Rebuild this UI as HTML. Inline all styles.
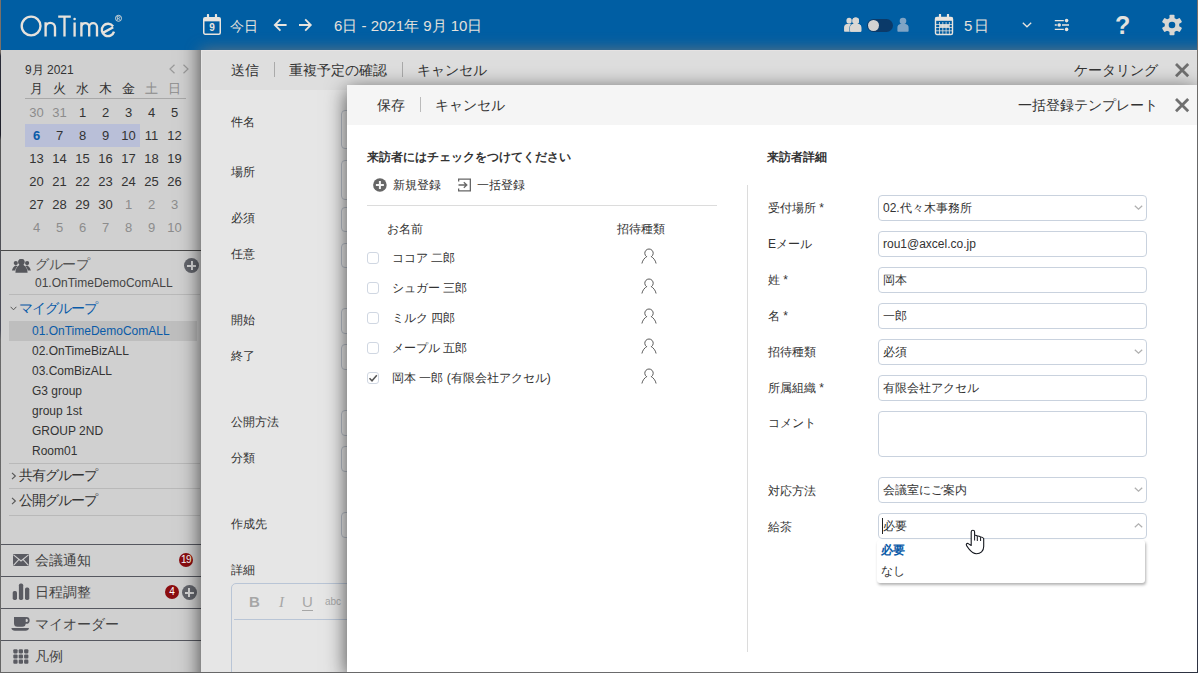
<!DOCTYPE html>
<html lang="ja">
<head>
<meta charset="utf-8">
<title>OnTime</title>
<style>
*{box-sizing:border-box;margin:0;padding:0}
html,body{width:1200px;height:675px;overflow:hidden;background:#fff;font-family:"Liberation Sans",sans-serif;color:#333}
#app{position:absolute;left:0;top:0;width:1198px;height:673px;overflow:hidden;background:#d0d0d0}
#redge{position:absolute;left:1197px;top:0;width:1px;height:673px;background:linear-gradient(#7a7068 0,#6a6a6a 120px,#5a5c62 400px,#3a4050 600px,#2c3140 100%);z-index:50}
#bedge{position:absolute;left:0;top:672px;width:1198px;height:1px;background:linear-gradient(to right,#666 0,#6c6c6e 800px,#3a4050 1050px,#2c3140 100%);z-index:50}
#ledge{position:absolute;left:0;top:0;width:1px;height:673px;background:linear-gradient(#7a7068 0,#7a7068 52px,#2a2c38 56px,#1c1e28 135px,#555 140px,#4a4c58 330px,#6a6a6a 340px,#666 100%);z-index:50}
.abs{position:absolute;white-space:nowrap}
/* top bar */
#top{position:absolute;left:0;top:0;width:1197px;height:50px;background:#005ea3;color:#ece8e2;z-index:5;overflow:hidden}
#top:after{content:"";position:absolute;left:201px;top:50px;width:1100px;height:30px;box-shadow:0 0 15px rgba(119,119,119,.85)}
#top .t{position:absolute;white-space:nowrap;font-size:15px;line-height:20px;top:16px;color:#e4e1dc}
/* sidebar */
#side{position:absolute;left:0;top:50px;width:201px;height:622px;background:#d0d0d0;font-size:13px}
.mc{position:absolute;width:23px;text-align:center;font-size:13px;line-height:16px;color:#333}
.mc.g{color:#8c8c8c}
.hl{position:absolute;background:#b9bfd8}
.ln{position:absolute;height:1px;background:#b9b9b9}
.dln{position:absolute;height:1px;background:#55575f;left:0;width:201px}
.gi{position:absolute;left:32px;font-size:12px;line-height:16px;margin-top:1px;color:#333;white-space:nowrap}
.gh{position:absolute;font-size:14px;letter-spacing:-1px;line-height:18px;color:#333;white-space:nowrap}
.sb{position:absolute;left:35px;font-size:14px;line-height:18px;color:#444;white-space:nowrap}
.badge{position:absolute;width:14px;height:14px;border-radius:50%;background:#8b0d10;color:#fff;font-size:10px;line-height:14px;text-align:center}
.plus{position:absolute;width:15px;height:15px;border-radius:50%;background:#63656c}
.plus:before{content:"";position:absolute;left:3px;top:6.5px;width:9px;height:2px;background:#d8d8d8}
.plus:after{content:"";position:absolute;left:6.5px;top:3px;width:2px;height:9px;background:#d8d8d8}
/* dialog 1 */
#d1{position:absolute;left:201px;top:50px;width:996px;height:622px;background:#e6e6e6}
#d1s{position:absolute;left:201px;top:0;width:996px;height:740px;box-shadow:0 0 20px rgba(0,0,0,.7)}
#d1h{position:absolute;left:0;top:0;width:996px;height:40px;background:#dedede;border-top:1px solid #e6e3e3;border-left:1px solid #e6e6e6}
.ht{position:absolute;font-size:14px;line-height:20px;color:#333;white-space:nowrap}
.sep{position:absolute;width:1px;height:15px;background:#aaa}
.lb{position:absolute;left:30px;font-size:12px;line-height:16px;color:#333;white-space:nowrap}
.bi{position:absolute;left:140px;width:300px;border:1px solid #b9bfc9;border-radius:4px;background:#eaeaea}
/* dialog 2 */
#d2{position:absolute;left:347px;top:85px;width:850px;height:587px;background:#fff;box-shadow:0 5px 20px rgba(0,0,0,.7)}
#d2h{position:absolute;left:0;top:0;width:850px;height:40px;background:#f5f5f5}
.l2{position:absolute;font-size:12px;line-height:16px;color:#333;white-space:nowrap}
.b{font-weight:bold}
.in{position:absolute;left:531px;width:269px;height:26px;border:1px solid #c9d2de;border-radius:4px;background:#fff;font-size:12px;line-height:24px;padding-left:4px;color:#333;white-space:nowrap}
.cb{position:absolute;left:20px;width:12px;height:12px;border:1px solid #d0d7e2;border-radius:3px;background:#fff}
.chev{position:absolute;right:3.500px;top:7px;width:9px;height:9px}
</style>
</head>
<body>
<div id="app">
<!--TOP-->
<div id="top">
<svg class="abs" style="left:0;top:0" width="140" height="50" viewBox="0 0 140 50" fill="none" stroke="#e6e2dc" stroke-width="2.350" stroke-linecap="butt">
<circle cx="31.1" cy="26" r="9.4"/>
<path d="M45.6 22.3V36.6M45.6 27.5a4.7 4.7 0 0 1 9.4 0V36.6"/>
<path d="M58.2 16.6H70.8M64.5 16.6V36.6"/>
<path d="M74.6 22.5V36.6"/><circle cx="74.6" cy="19" r="1.3" fill="#e9e5df" stroke="none"/>
<path d="M81.4 22.3V36.6M81.4 27a3.9 3.9 0 0 1 7.8 0V36.6M89.2 27a3.9 3.9 0 0 1 7.8 0V36.6"/>
<path d="M103.4 32.6L113.2 27.2M114 31.6a6.2 6.2 0 1 1 -0.9 -5.2"/>
<circle cx="118.5" cy="18.3" r="3" stroke-width="0.9"/>
<path d="M117.4 20V16.6h1.2a1 1 0 0 1 0 2h-1.2m1.2 0l1.1 1.4" stroke-width="0.7"/>
</svg>
<!-- calendar 9 -->
<svg class="abs" style="left:202px;top:14px" width="20" height="22" viewBox="0 0 20 22" fill="none" stroke="#e9e5df">
<rect x="1.75" y="3.75" width="16.5" height="16.5" rx="1.5" stroke-width="1.5"/>
<rect x="1.75" y="3.75" width="16.5" height="3.6" fill="#e9e5df" stroke="none"/>
<path d="M6 1v4M14 1v4" stroke-width="2.2" stroke-linecap="round"/>
<text x="10" y="17.3" font-family="Liberation Sans, sans-serif" font-size="10" font-weight="bold" fill="#e9e5df" stroke="none" text-anchor="middle">9</text>
</svg>
<div class="t" style="left:230px;font-size:14px">今日</div>
<svg class="abs" style="left:273px;top:18px" width="40" height="14" viewBox="0 0 40 14" fill="none" stroke="#e9e5df" stroke-width="1.8">
<path d="M13.6 7H2.2M7.4 1.4L1.8 7l5.600 5.600"/>
<path d="M26 7H37.400M32.200 1.400L37.800 7l-5.600 5.600"/>
</svg>
<div class="t" style="left:334px">6日&nbsp;-&nbsp;2021年&nbsp;9月&nbsp;10日</div>
<!-- people -->
<svg class="abs" style="left:843px;top:17px" width="20" height="16" viewBox="0 0 20 16">
<g fill="#dad8d4"><g transform="translate(0.700,0) scale(0.900,1)"><circle cx="6" cy="3.700" r="3"/><path d="M0.400 14V10.800Q0.400 7.600 3.400 7.100H8.600Q11.600 7.600 11.600 10.800V14Q11.600 14.800 10.800 14.800H1.200Q0.400 14.800 0.400 14Z"/></g>
<g transform="translate(6.700,0)" stroke="#005ea3" stroke-width="1.200" paint-order="stroke"><circle cx="6" cy="3.900" r="3.300"/><path d="M0.400 14V10.800Q0.400 7.600 3.400 7.100H8.600Q11.600 7.600 11.600 10.800V14Q11.600 14.800 10.800 14.800H1.200Q0.400 14.800 0.400 14Z"/></g>
<g transform="translate(6.700,0)"><circle cx="6" cy="3.900" r="3.300"/><path d="M0.400 14V10.800Q0.400 7.600 3.400 7.100H8.600Q11.600 7.600 11.600 10.800V14Q11.600 14.800 10.800 14.800H1.200Q0.400 14.800 0.400 14Z"/></g></g>
</svg>
<div class="abs" style="left:867px;top:19px;width:26px;height:13px;border-radius:7px;background:#0b3a69"></div>
<div class="abs" style="left:868.300px;top:20.300px;width:10.800px;height:10.800px;border-radius:50%;background:#d2d2d2"></div>
<svg class="abs" style="left:896.500px;top:17px" width="13" height="16" viewBox="0 0 13 16"><g fill="#7fa4c5"><circle cx="6" cy="4" r="3.300"/><path d="M0.400 14V10.800Q0.400 7.600 3.400 7.100H8.600Q11.600 7.600 11.600 10.800V14Q11.600 14.800 10.800 14.800H1.200Q0.400 14.800 0.400 14Z"/></g></svg>
<!-- calendar grid -->
<svg class="abs" style="left:934px;top:14px" width="20" height="22" viewBox="0 0 20 22" fill="none" stroke="#e9e5df">
<rect x="1.500" y="3.500" width="17" height="17" rx="1.500" stroke-width="1.400"/>
<rect x="1.500" y="3.500" width="17" height="3.300" fill="#e9e5df" stroke="none"/>
<path d="M6 0.800v4.400M14 0.800v4.400" stroke-width="2.200" stroke-linecap="round"/>
<path d="M2 10.500h16M2 13.500h16M2 16.800h16M5.500 8v12M8.800 8v12M12.100 8v12M15.400 8v12" stroke-width="0.900" opacity="0.850"/>
<rect x="6" y="10.600" width="9" height="2.800" fill="#e9e5df" stroke="none" opacity="0.900"/>
</svg>
<div class="t" style="left:964px;letter-spacing:1.500px">5日</div>
<svg class="abs" style="left:1022px;top:22px" width="10" height="6" viewBox="0 0 10 6" fill="none" stroke="#e9e5df" stroke-width="1.300"><path d="M0.800 0.800L5 4.800L9.200 0.800"/></svg>
<!-- sliders -->
<svg class="abs" style="left:1054px;top:18px" width="16" height="14" viewBox="0 0 16 14" fill="#e9e5df" stroke="#e9e5df" stroke-width="1.300">
<path d="M0.800 2.600h9M0.800 7h2M8 7h7M0.800 11.400h9" fill="none"/>
<circle cx="12.600" cy="2.600" r="1.800" stroke="none"/><circle cx="5.200" cy="7" r="1.800" stroke="none"/><circle cx="12.600" cy="11.400" r="1.800" stroke="none"/>
</svg>
<div class="abs" style="left:1115px;top:11px;width:14px;text-align:center;font-size:25px;line-height:28px;font-weight:bold;color:#e4e2de">?</div>
<!-- gear -->
<svg class="abs" style="left:1161px;top:14px" width="22" height="22" viewBox="-11 -11 22 22">
<g fill="#d9d7d3">
<circle r="7.300"/>
<g id="tooth"><rect x="-2.500" y="-10.200" width="5" height="5" rx="0.800"/></g>
<use href="#tooth" transform="rotate(60)"/><use href="#tooth" transform="rotate(120)"/><use href="#tooth" transform="rotate(180)"/><use href="#tooth" transform="rotate(240)"/><use href="#tooth" transform="rotate(300)"/>
</g><circle r="3.300" fill="#005ea3"/>
</svg>
</div>
<!--SIDE-->
<div id="side">
<div class="abs" style="left:25px;top:12px;font-size:12px;line-height:16px;color:#333">9月 2021</div>
<svg class="abs" style="left:168px;top:14px" width="22" height="10" viewBox="0 0 22 10" fill="none" stroke="#9a9a9a" stroke-width="1.200"><path d="M6.500 0.800L2 5l4.500 4.200M15.500 0.800L20 5l-4.500 4.200"/></svg>
<div class="mc" style="left:25px;top:31px;font-size:13px">月</div>
<div class="mc" style="left:48px;top:31px;font-size:13px">火</div>
<div class="mc" style="left:71px;top:31px;font-size:13px">水</div>
<div class="mc" style="left:94px;top:31px;font-size:13px">木</div>
<div class="mc" style="left:117px;top:31px;font-size:13px">金</div>
<div class="mc g" style="left:140px;top:31px;font-size:13px">土</div>
<div class="mc g" style="left:163px;top:31px;font-size:13px">日</div>
<div class="ln" style="left:25px;width:161px;top:48px;background:#a8a8a8"></div>
<div class="hl" style="left:25px;top:74px;width:115px;height:23px"></div>
<div class="mc g" style="left:25px;top:55px">30</div>
<div class="mc g" style="left:48px;top:55px">31</div>
<div class="mc" style="left:71px;top:55px">1</div>
<div class="mc" style="left:94px;top:55px">2</div>
<div class="mc" style="left:117px;top:55px">3</div>
<div class="mc" style="left:140px;top:55px">4</div>
<div class="mc" style="left:163px;top:55px">5</div>
<div class="mc" style="left:25px;top:78px;color:#0a5ba8;font-weight:bold">6</div>
<div class="mc" style="left:48px;top:78px">7</div>
<div class="mc" style="left:71px;top:78px">8</div>
<div class="mc" style="left:94px;top:78px">9</div>
<div class="mc" style="left:117px;top:78px">10</div>
<div class="mc" style="left:140px;top:78px">11</div>
<div class="mc" style="left:163px;top:78px">12</div>
<div class="mc" style="left:25px;top:101px">13</div>
<div class="mc" style="left:48px;top:101px">14</div>
<div class="mc" style="left:71px;top:101px">15</div>
<div class="mc" style="left:94px;top:101px">16</div>
<div class="mc" style="left:117px;top:101px">17</div>
<div class="mc" style="left:140px;top:101px">18</div>
<div class="mc" style="left:163px;top:101px">19</div>
<div class="mc" style="left:25px;top:124px">20</div>
<div class="mc" style="left:48px;top:124px">21</div>
<div class="mc" style="left:71px;top:124px">22</div>
<div class="mc" style="left:94px;top:124px">23</div>
<div class="mc" style="left:117px;top:124px">24</div>
<div class="mc" style="left:140px;top:124px">25</div>
<div class="mc" style="left:163px;top:124px">26</div>
<div class="mc" style="left:25px;top:147px">27</div>
<div class="mc" style="left:48px;top:147px">28</div>
<div class="mc" style="left:71px;top:147px">29</div>
<div class="mc" style="left:94px;top:147px">30</div>
<div class="mc g" style="left:117px;top:147px">1</div>
<div class="mc g" style="left:140px;top:147px">2</div>
<div class="mc g" style="left:163px;top:147px">3</div>
<div class="mc g" style="left:25px;top:170px">4</div>
<div class="mc g" style="left:48px;top:170px">5</div>
<div class="mc g" style="left:71px;top:170px">6</div>
<div class="mc g" style="left:94px;top:170px">7</div>
<div class="mc g" style="left:117px;top:170px">8</div>
<div class="mc g" style="left:140px;top:170px">9</div>
<div class="mc g" style="left:163px;top:170px">10</div>
<div class="dln" style="top:200px;height:1px;background:#4a4a4a"></div>
<svg class="abs" style="left:11px;top:208px" width="21" height="16" viewBox="0 0 21 16"><g fill="#56575c"><circle cx="4.800" cy="5.100" r="2.100"/><path d="M0.900 12.500C1.600 10 3 8.100 4.600 7.600L7.200 8.200C5.600 9.800 4.800 11.500 4.600 12.500Z"/><circle cx="16.100" cy="5.100" r="2.100"/><path d="M19.900 12.500C19.200 10 17.800 8.100 16.200 7.600L13.600 8.200C15.200 9.800 16 11.500 16.200 12.500Z"/><g stroke="#d0d0d0" stroke-width="0.900" paint-order="stroke"><ellipse cx="10.400" cy="4" rx="3.100" ry="3"/><path d="M4.400 14.700C4.400 11 6 8.300 8.400 7L12.400 7C14.800 8.300 16.600 11 16.600 14.700Z"/></g><ellipse cx="10.400" cy="4" rx="3.100" ry="3"/><rect x="8.400" y="6" width="4" height="2"/></g></svg>
<div class="gh" style="left:35px;top:205px;color:#555;font-size:14px;letter-spacing:-0.400px">グループ</div>
<div class="gi" style="left:35px;top:224px;color:#444">01.OnTimeDemoComALL</div>
<div class="plus" style="left:184px;top:208px"></div>
<div class="ln" style="left:9px;width:191px;top:244px"></div>
<svg class="abs" style="left:9.500px;top:255.500px" width="7" height="5" viewBox="0 0 7 5" fill="none" stroke="#555" stroke-width="1"><path d="M0.600 0.800L3.500 3.800L6.400 0.800"/></svg>
<div class="gh" style="left:19px;top:249px;color:#0a5ba8">マイグループ</div>
<div class="hl" style="left:9px;top:271px;width:188px;height:20px;background:#bebebe"></div>
<div class="gi" style="top:272px;color:#0a5ba8">01.OnTimeDemoComALL</div>
<div class="gi" style="top:292px">02.OnTimeBizALL</div>
<div class="gi" style="top:312px">03.ComBizALL</div>
<div class="gi" style="top:332px">G3 group</div>
<div class="gi" style="top:352px">group 1st</div>
<div class="gi" style="top:372px">GROUP 2ND</div>
<div class="gi" style="top:392px">Room01</div>
<div class="ln" style="left:9px;width:191px;top:413px"></div>
<div class="ln" style="left:9px;width:191px;top:438px"></div>
<div class="ln" style="left:9px;width:191px;top:465px"></div>
<svg class="abs" style="left:11px;top:422px" width="6" height="8" viewBox="0 0 6 8" fill="none" stroke="#555" stroke-width="1.100"><path d="M1 0.800L4.400 4L1 7.200"/></svg>
<div class="gh" style="left:19px;top:416px">共有グループ</div>
<svg class="abs" style="left:11px;top:447px" width="6" height="8" viewBox="0 0 6 8" fill="none" stroke="#555" stroke-width="1.100"><path d="M1 0.800L4.400 4L1 7.200"/></svg>
<div class="gh" style="left:19px;top:441px">公開グループ</div>
<div class="dln" style="top:494px"></div>
<div class="dln" style="top:526px"></div>
<div class="dln" style="top:558px"></div>
<div class="dln" style="top:590px"></div>
<div class="sb" style="top:501px">会議通知</div>
<div class="sb" style="top:533px">日程調整</div>
<div class="sb" style="top:565px">マイオーダー</div>
<div class="sb" style="top:597px">凡例</div>
<svg class="abs" style="left:13px;top:504px" width="16" height="12" viewBox="0 0 16 12"><rect x="0" y="0" width="16" height="12" rx="0.800" fill="#5a5b62"/><path d="M0.500 0.800L8 7L15.500 0.800M0.500 11.400L5.800 5.600M15.500 11.400L10.200 5.600" fill="none" stroke="#d0d0d0" stroke-width="1.100"/></svg>
<svg class="abs" style="left:12px;top:533px" width="18" height="18" viewBox="0 0 18 18" fill="#5a5b62"><rect x="0.700" y="8" width="4.300" height="9" rx="1.700"/><rect x="6.900" y="0.600" width="4.300" height="16.400" rx="1.700"/><rect x="13" y="4.600" width="4.300" height="12.400" rx="1.700"/></svg>
<svg class="abs" style="left:11px;top:566px" width="20" height="16" viewBox="0 0 20 16" fill="#5a5b62"><path d="M3 1h11.700v6.200a3.500 3.500 0 0 1-3.500 3.500H6.500a3.500 3.500 0 0 1-3.500-3.500z"/><circle cx="15.300" cy="4.400" r="2.500" fill="none" stroke="#5a5b62" stroke-width="1.700"/><path d="M0.400 12H18Q17.600 14.700 14.500 14.700H3.900Q0.800 14.700 0.400 12Z"/></svg>
<svg class="abs" style="left:13px;top:598.500px" width="16" height="16" viewBox="0 0 16 16" fill="#5a5b62"><rect x="0.3" y="0.2" width="4.300" height="4.200" rx="1.100"/><rect x="5.7" y="0.2" width="4.300" height="4.200" rx="1.100"/><rect x="11.1" y="0.2" width="4.300" height="4.200" rx="1.100"/><rect x="0.3" y="5.4" width="4.300" height="4.200" rx="1.100"/><rect x="5.7" y="5.4" width="4.300" height="4.200" rx="1.100"/><rect x="11.1" y="5.4" width="4.300" height="4.200" rx="1.100"/><rect x="0.3" y="10.6" width="4.300" height="4.200" rx="1.100"/><rect x="5.7" y="10.6" width="4.300" height="4.200" rx="1.100"/><rect x="11.1" y="10.6" width="4.300" height="4.200" rx="1.100"/></svg>
<div class="badge" style="left:179px;top:503px;font-size:10px;letter-spacing:-0.500px">19</div>
<div class="badge" style="left:165px;top:535px">4</div>
<div class="plus" style="left:181.500px;top:535px"></div>
</div>
<!--D1-->
<div id="d1s"></div>
<div id="d1"><div id="d1h"></div>
<div class="ht" style="left:30px;top:10px">送信</div>
<div class="sep" style="left:73px;top:12px"></div>
<div class="ht" style="left:88px;top:10px">重複予定の確認</div>
<div class="sep" style="left:201px;top:12px"></div>
<div class="ht" style="left:216px;top:10px">キャンセル</div>
<div class="ht" style="right:39px;top:10px">ケータリング</div>
<svg class="abs" style="left:972px;top:11px" width="18" height="18" viewBox="0 0 18 18" fill="none" stroke="#707070" stroke-width="2.800"><path d="M3 3L15.200 15.200M15.200 3L3 15.200"/></svg>
<div class="lb" style="top:64px">件名</div>
<div class="lb" style="top:114px">場所</div>
<div class="lb" style="top:160px">必須</div>
<div class="lb" style="top:196px">任意</div>
<div class="lb" style="top:262px">開始</div>
<div class="lb" style="top:298px">終了</div>
<div class="lb" style="top:364px">公開方法</div>
<div class="lb" style="top:400px">分類</div>
<div class="lb" style="top:466px">作成先</div>
<div class="lb" style="top:512px">詳細</div>
<div class="bi" style="top:60px;height:39px"></div>
<div class="bi" style="top:110px;height:40px"></div>
<div class="bi" style="top:157px;height:25px"></div>
<div class="bi" style="top:193px;height:25px"></div>
<div class="bi" style="top:258px;height:26px"></div>
<div class="bi" style="top:294px;height:26px"></div>
<div class="bi" style="top:360px;height:26px"></div>
<div class="bi" style="top:396px;height:26px"></div>
<div class="bi" style="top:462px;height:26px"></div>
<div class="abs" style="left:30px;top:533px;width:700px;height:100px;border:1px solid #b9c5d6;border-radius:5px;background:#e6e6e6"></div>
<div class="abs" style="left:33px;top:569px;width:690px;height:1px;background:#b9c5d6"></div>
<div class="abs" style="left:48px;top:543px;font-size:15px;line-height:18px;font-weight:bold;color:#a6a6a6">B</div>
<div class="abs" style="left:78px;top:543px;font-size:15px;line-height:18px;font-style:italic;color:#a6a6a6;font-family:'Liberation Serif',serif">I</div>
<div class="abs" style="left:101px;top:543px;font-size:15px;line-height:17px;color:#a6a6a6;border-bottom:1px solid #a6a6a6">U</div>
<div class="abs" style="left:124px;top:543px;font-size:10px;line-height:18px;color:#a6a6a6">abc</div>
</div>
<!--D2-->
<div id="d2"><div id="d2h"></div>
<div class="ht" style="left:30px;top:10px">保存</div>
<div class="sep" style="left:73px;top:12px;background:#bbb"></div>
<div class="ht" style="left:88px;top:10px">キャンセル</div>
<div class="ht" style="right:39px;top:10px">一括登録テンプレート</div>
<svg class="abs" style="left:826px;top:11px" width="18" height="18" viewBox="0 0 18 18" fill="none" stroke="#707070" stroke-width="2.800"><path d="M3 3L15.200 15.200M15.200 3L3 15.200"/></svg>
<div class="l2 b" style="left:20px;top:64px">来訪者にはチェックをつけてください</div>
<svg class="abs" style="left:26px;top:92.500px" width="14" height="14" viewBox="0 0 14 14"><circle cx="6.900" cy="7" r="6.800" fill="#666"/><path d="M6.900 3v8M2.900 7h8" stroke="#f4f4f4" stroke-width="2" fill="none"/></svg>
<div class="l2" style="left:46px;top:92px;font-size:12px">新規登録</div>
<svg class="abs" style="left:111px;top:92.500px" width="14" height="14" viewBox="0 0 14 14" fill="none" stroke="#666" stroke-width="1.300"><path d="M0.650 3.500V1.150H12.350V12.850H0.650V10.500M0.500 7H8.500M5.800 4.200L8.800 7L5.800 9.800"/></svg>
<div class="l2" style="left:130px;top:92px;font-size:12px">一括登録</div>
<div class="abs" style="left:20px;top:120px;width:350px;height:1px;background:#dcdcdc"></div>
<div class="l2" style="left:40px;top:136px;font-size:12px">お名前</div>
<div class="l2" style="left:270px;top:136px;font-size:12px">招待種類</div>
<div class="cb" style="top:167px"></div>
<div class="l2" style="left:45px;top:165px;font-size:12px">ココア 二郎</div>
<svg class="abs" style="left:294.400px;top:163px" width="16" height="17" viewBox="0 0 16 17" fill="none" stroke="#5a5a5a" stroke-width="1"><path d="M5.530 8.600A4.200 4.200 0 1 1 10.470 8.600M6.100 8.300C3.600 9.800 1.600 12.200 0.900 15.500M9.900 8.300C12.400 9.800 14.400 12.200 15.100 15.500"/></svg>
<div class="cb" style="top:197px"></div>
<div class="l2" style="left:45px;top:195px;font-size:12px">シュガー 三郎</div>
<svg class="abs" style="left:294.400px;top:193px" width="16" height="17" viewBox="0 0 16 17" fill="none" stroke="#5a5a5a" stroke-width="1"><path d="M5.530 8.600A4.200 4.200 0 1 1 10.470 8.600M6.100 8.300C3.600 9.800 1.600 12.200 0.900 15.500M9.900 8.300C12.400 9.800 14.400 12.200 15.100 15.500"/></svg>
<div class="cb" style="top:227px"></div>
<div class="l2" style="left:45px;top:225px;font-size:12px">ミルク 四郎</div>
<svg class="abs" style="left:294.400px;top:223px" width="16" height="17" viewBox="0 0 16 17" fill="none" stroke="#5a5a5a" stroke-width="1"><path d="M5.530 8.600A4.200 4.200 0 1 1 10.470 8.600M6.100 8.300C3.600 9.800 1.600 12.200 0.900 15.500M9.900 8.300C12.400 9.800 14.400 12.200 15.100 15.500"/></svg>
<div class="cb" style="top:257px"></div>
<div class="l2" style="left:45px;top:255px;font-size:12px">メープル 五郎</div>
<svg class="abs" style="left:294.400px;top:253px" width="16" height="17" viewBox="0 0 16 17" fill="none" stroke="#5a5a5a" stroke-width="1"><path d="M5.530 8.600A4.200 4.200 0 1 1 10.470 8.600M6.100 8.300C3.600 9.800 1.600 12.200 0.900 15.500M9.900 8.300C12.400 9.800 14.400 12.200 15.100 15.500"/></svg>
<div class="cb" style="top:287px"></div>
<svg class="abs" style="left:20px;top:287px" width="12" height="12" viewBox="0 0 12 12" fill="none" stroke="#555" stroke-width="1.500"><path d="M2.500 6.200L5 8.800L9.800 3.200"/></svg>
<div class="l2" style="left:45px;top:285px;font-size:12px">岡本 一郎 (有限会社アクセル)</div>
<svg class="abs" style="left:294.400px;top:283px" width="16" height="17" viewBox="0 0 16 17" fill="none" stroke="#5a5a5a" stroke-width="1"><path d="M5.530 8.600A4.200 4.200 0 1 1 10.470 8.600M6.100 8.300C3.600 9.800 1.600 12.200 0.900 15.500M9.900 8.300C12.400 9.800 14.400 12.200 15.100 15.500"/></svg>
<div class="abs" style="left:400px;top:100px;width:1px;height:467px;background:#dcdcdc"></div>
<div class="l2 b" style="left:419.500px;top:64px">来訪者詳細</div>
<div class="l2" style="left:421px;top:115px">受付場所 *</div>
<div class="l2" style="left:421px;top:151px">Eメール</div>
<div class="l2" style="left:421px;top:187px">姓 *</div>
<div class="l2" style="left:421px;top:223px">名 *</div>
<div class="l2" style="left:421px;top:259px">招待種類</div>
<div class="l2" style="left:421px;top:295px">所属組織 *</div>
<div class="l2" style="left:421px;top:330px">コメント</div>
<div class="l2" style="left:421px;top:398px">対応方法</div>
<div class="l2" style="left:421px;top:434px">給茶</div>
<div class="in" style="top:110px">02.代々木事務所<svg class="chev" viewBox="0 0 9 9" fill="none" stroke="#b0b0b0" stroke-width="1.250"><path d="M0.800 2.800L4.500 6.200L8.200 2.800"/></svg></div>
<div class="in" style="top:146px">rou1@axcel.co.jp</div>
<div class="in" style="top:182px">岡本</div>
<div class="in" style="top:218px">一郎</div>
<div class="in" style="top:254px">必須<svg class="chev" viewBox="0 0 9 9" fill="none" stroke="#b0b0b0" stroke-width="1.250"><path d="M0.800 2.800L4.500 6.200L8.200 2.800"/></svg></div>
<div class="in" style="top:290px">有限会社アクセル</div>
<div class="in" style="top:392px">会議室にご案内<svg class="chev" viewBox="0 0 9 9" fill="none" stroke="#b0b0b0" stroke-width="1.250"><path d="M0.800 2.800L4.500 6.200L8.200 2.800"/></svg></div>
<div class="in" style="top:428px">必要<svg class="chev" viewBox="0 0 9 9" fill="none" stroke="#b0b0b0" stroke-width="1.250"><path d="M0.800 6.200L4.500 2.800L8.200 6.200"/></svg></div>
<div class="in" style="top:326px;height:46px"></div>
<div class="abs" style="left:535px;top:433px;width:1px;height:16px;background:#222"></div>
<div class="abs" style="left:530px;top:455px;width:268px;height:43px;background:#fff;border-radius:3px;box-shadow:1px 2px 3px rgba(0,0,0,.3)"></div>
<div class="l2 b" style="left:534px;top:457px;color:#0a5ba8;font-size:12px">必要</div>
<div class="l2" style="left:534px;top:478px;font-size:12px">なし</div>
<svg class="abs" style="left:618px;top:444px" width="20" height="26" viewBox="0 0 20 26"><path d="M6.200 15.500V2.900a1.700 1.700 0 0 1 3.400 0V6.300Q11 5.900 12.300 7Q13.800 6.700 15.600 8Q17.300 7.800 18.700 9.500V17.500C18.700 22 15.500 24.700 11.500 24.700C7.500 24.700 5.500 22 3.800 19.800L1.600 16.600C0.800 15.300 1.800 14 3.200 14.600L6.200 16.500Z" fill="#fff" stroke="#15181f" stroke-width="1.100" stroke-linejoin="round"/><path d="M9.600 6.300V11.500M12.300 7.200V12M15.600 8.200V12" stroke="#15181f" stroke-width="1" fill="none"/></svg>
</div>
<div id="ledge"></div><div id="redge"></div><div id="bedge"></div>
</div>
</body>
</html>
